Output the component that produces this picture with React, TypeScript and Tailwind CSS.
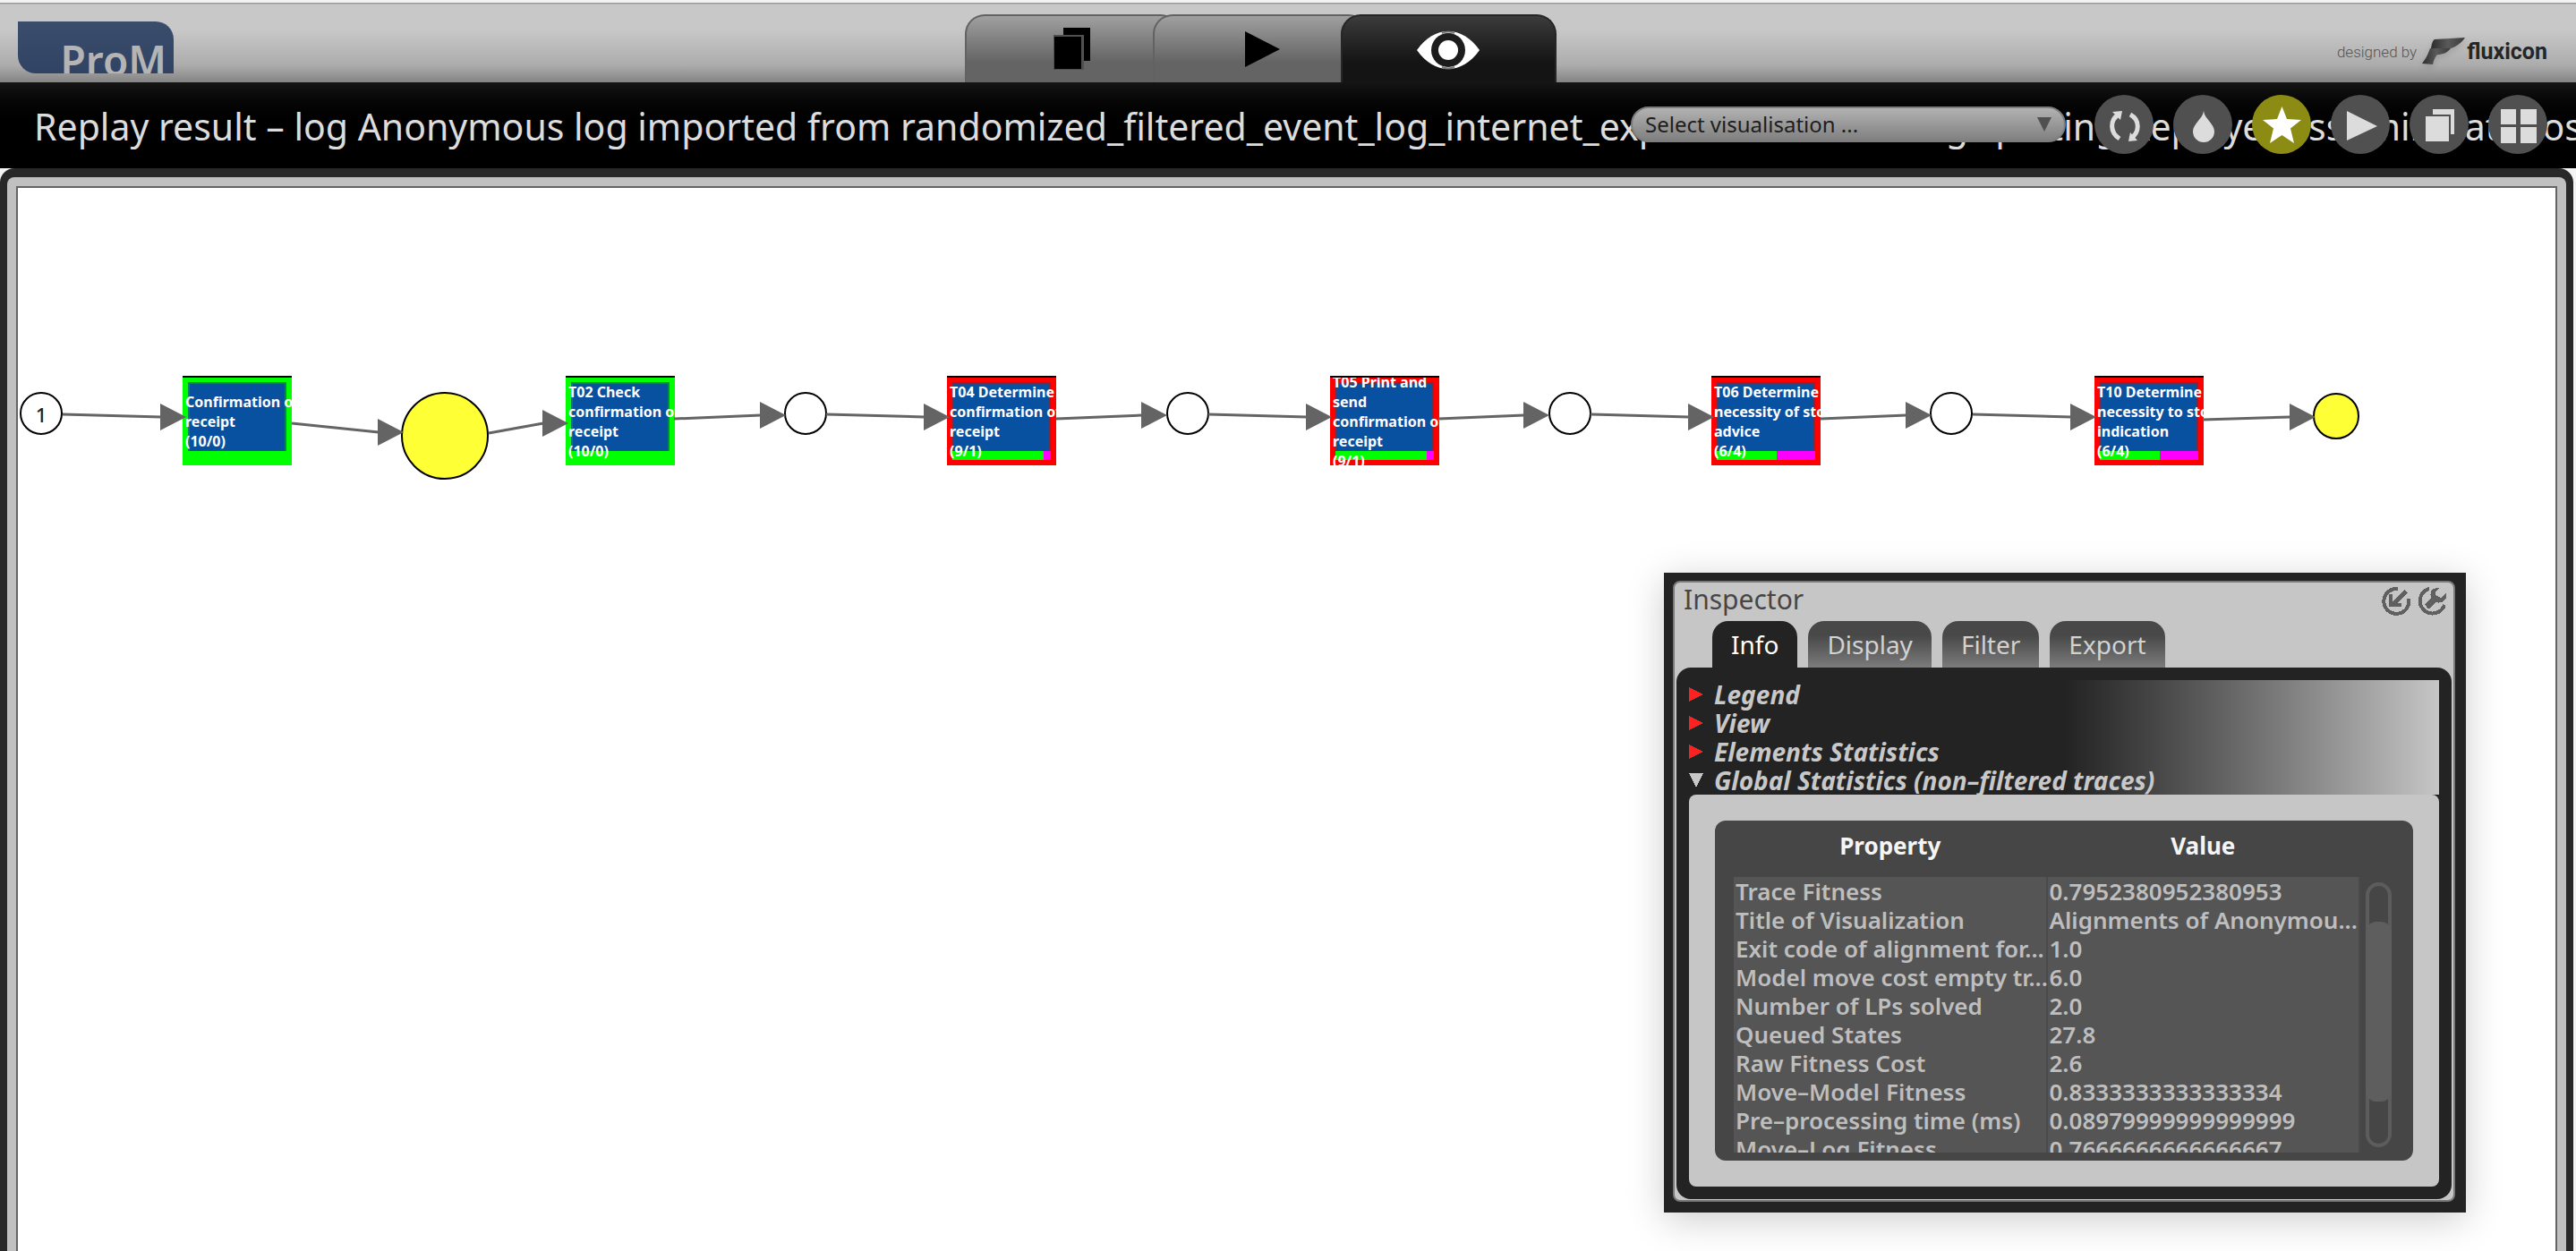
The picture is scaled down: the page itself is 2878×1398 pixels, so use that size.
import React from "react";

const SANS = "font-['Noto_Sans','Open_Sans',sans-serif]";

/* ---------- top bar ---------- */

function PagesIcon() {
  return (
    <svg width="42" height="48" viewBox="0 0 42 48" aria-hidden="true">
      <rect x="11" y="1" width="30" height="37" fill="#000" />
      <rect x="0" y="9" width="34" height="39" fill="#505050" />
      <rect x="1" y="11" width="30" height="36" fill="#000" />
    </svg>
  );
}

function PlayIcon() {
  return (
    <svg width="40" height="42" viewBox="0 0 40 42" aria-hidden="true">
      <path d="M1 1 L40 21 L1 41 Z" fill="#000" />
    </svg>
  );
}

function EyeIcon() {
  return (
    <svg width="70" height="44" viewBox="0 0 70 44" aria-hidden="true">
      <path d="M0 22 C10 8 22 1 35 1 C48 1 60 8 70 22 C60 36 48 43 35 43 C22 43 10 36 0 22 Z" fill="#fff" />
      <circle cx="35" cy="22" r="19" fill="#1c1c1c" />
      <path d="M28 3 Q35 0 42 3 M28 41 Q35 44 42 41" stroke="#777" strokeWidth="2" fill="none" />
      <circle cx="35" cy="22" r="11" fill="#fff" />
    </svg>
  );
}

function FluxiconMark() {
  return (
    <svg width="48" height="32" viewBox="0 0 48 32" aria-hidden="true" className="drop-shadow-md">
      <defs>
        <linearGradient id="flux" x1="0" y1="0" x2="1" y2="0">
          <stop offset="0" stopColor="#2c2c2c" />
          <stop offset="0.5" stopColor="#5a5a5a" />
          <stop offset="1" stopColor="#3a3a3a" />
        </linearGradient>
      </defs>
      <path d="M14 2 L48 0 C44 6 38 10 32 12 L10 12 C11 6 12 3 14 2 Z" fill="url(#flux)" />
      <path d="M9 12 L32 12 C28 17 23 19 17 19 C14 22 13 26 12 30 L0 29 C4 24 7 18 9 12 Z" fill="url(#flux)" />
    </svg>
  );
}

function TopBar() {
  const tab = "flex h-[76px] w-[241px] items-start justify-center rounded-t-[22px] border-2 border-b-0";
  return (
    <header className="flex items-end justify-between border-t-[3px] border-[#f2f2f2] bg-[linear-gradient(#9a9a9a_1px,#c8c8c8_2px,#c8c8c8_30px,#acacac_70px,#848484_100%)] pl-5">
      <div className="mt-[21px] mr-3 mb-[10px] h-[58px] w-[174px] overflow-hidden rounded-tr-[20px] rounded-bl-[20px] bg-linear-to-b from-[#3b4d6b] to-[#304364] pt-5 pr-2 text-right text-[46px] leading-[46px] font-semibold text-[#b4b4b4]">
        ProM
      </div>
      <nav className="flex" aria-label="Views">
        <button aria-label="Workspace" className={`${tab} -mr-[31px] border-[#626262] bg-linear-to-b from-[#a0a0a0] to-[#646464] to-70% pt-3`}>
          <PagesIcon />
        </button>
        <button aria-label="Actions" className={`${tab} -mr-[31px] border-[#626262] bg-linear-to-b from-[#a0a0a0] to-[#646464] to-70% pt-4 pl-1`}>
          <PlayIcon />
        </button>
        <button aria-label="Visualise" className={`${tab} border-[#262626] bg-linear-to-b from-[#3c3c3c] to-[#141414] to-70% pt-4`}>
          <EyeIcon />
        </button>
      </nav>
      <a href="#fluxicon" className="mr-8 mb-[18px] flex items-center gap-[2px] font-['Roboto',sans-serif] text-[#262626]">
        <span className="mr-1 text-[17px] leading-[32px] font-light text-[#555]">designed by</span>
        <FluxiconMark />
        <span className="text-[25px] leading-[32px] font-bold">fluxicon</span>
      </a>
    </header>
  );
}

/* ---------- title bar ---------- */

const LIGHT = "#dcdcdc";

const ACTIONS: { name: string; active?: boolean; art: React.ReactNode }[] = [
  {
    name: "Refresh",
    art: (
      <>
        <path d="M27 22 C17 28 17 42 28 49 M40 22 C51 28 51 42 40 49" fill="none" stroke={LIGHT} strokeWidth="5" />
        <path d="M20 19 L31 18 L29 28 Z M38 52 L40 42 L48 51 Z" fill={LIGHT} />
      </>
    ),
  },
  {
    name: "Drop",
    art: <path d="M34 18 C35 27 46 32 46 41 A12 12 0 0 1 22 41 C22 32 33 27 34 18 Z" fill={LIGHT} />,
  },
  {
    name: "Favourite",
    active: true,
    art: <path d="M33.500 13 L39 27 L55 28 L43 37.500 L47 54 L33.500 45 L20 54 L24 37.500 L12 28 L28 27 Z" fill="#fff" />,
  },
  { name: "Run", art: <path d="M18 18 L52 35 L18 51 Z" fill={LIGHT} /> },
  {
    name: "Copy",
    art: (
      <>
        <rect x="26" y="16" width="24" height="28" fill={LIGHT} />
        <rect x="16" y="22" width="30" height="32" fill="#505050" />
        <rect x="18" y="24" width="26" height="28" fill={LIGHT} />
      </>
    ),
  },
  {
    name: "Grid",
    art: <path d="M14 16h17v17H14z M36 16h18v17H36z M14 36h17v18H14z M36 36h18v18H36z" fill={LIGHT} />,
  },
];

function TitleBar() {
  return (
    <div className="relative flex h-24 items-center overflow-hidden bg-linear-to-b from-[#151515] to-black to-60% pt-[2px] pl-[38px]">
      <h1 className="text-[41px] leading-[56px] whitespace-nowrap text-[#dcdcdc]">
        Replay result – log Anonymous log imported from randomized_filtered_event_log_internet_explorer on net using
        splitting Replayer assuming at most
      </h1>
      <div className="absolute top-[14px] right-8 flex items-center gap-[22px]">
        <div className="relative mr-[10px]">
          <select
            aria-label="Select visualisation"
            className="h-10 w-[486px] appearance-none rounded-full border-2 border-[#7c7c7c] bg-linear-to-b from-[#b2b2b2] to-[#808080] px-[14px] text-[24px] leading-[32px] text-[#1e1e1e]"
          >
            <option>Select visualisation ...</option>
          </select>
          <svg width="16" height="16" viewBox="0 0 16 16" className="pointer-events-none absolute top-3 right-4" aria-hidden="true">
            <path d="M0 0 H16 L8 16 Z" fill="#505050" />
          </svg>
        </div>
        {ACTIONS.map((a) => (
          <button
            key={a.name}
            aria-label={a.name}
            className={`size-[66px] rounded-full ${a.active ? "bg-[#8c8c14]" : "bg-[#505050]"}`}
          >
            <svg viewBox="0 0 66 66" className="size-full" aria-hidden="true">
              {a.art}
            </svg>
          </button>
        ))}
      </div>
    </div>
  );
}

/* ---------- process model ---------- */

const TRANSITIONS = [
  { x: 184, label: "Confirmation of\nreceipt\n(10/0)", sync: 100 },
  { x: 612, label: "T02 Check\nconfirmation of\nreceipt\n(10/0)", sync: 100 },
  { x: 1038, label: "T04 Determine\nconfirmation of\nreceipt\n(9/1)", sync: 93 },
  { x: 1466, label: "T05 Print and\nsend\nconfirmation of\nreceipt\n(9/1)", sync: 93 },
  { x: 1892, label: "T06 Determine\nnecessity of stop\nadvice\n(6/4)", sync: 61 },
  { x: 2320, label: "T10 Determine\nnecessity to stop\nindication\n(6/4)", sync: 61 },
];

const PLACES = [
  { x: 26, y: 252, r: 23, fill: "#fff" },
  { x: 477, y: 277, r: 48, fill: "#ffff35" },
  { x: 880, y: 252, r: 23, fill: "#fff" },
  { x: 1307, y: 252, r: 23, fill: "#fff" },
  { x: 1734, y: 252, r: 23, fill: "#fff" },
  { x: 2160, y: 252, r: 23, fill: "#fff" },
  { x: 2590, y: 255, r: 25, fill: "#ffff35" },
];

/* x1, y1: start of the line; x2, y2: tip of the arrow head */
const ARCS = [
  [50, 253, 188, 256],
  [306, 263, 431, 273],
  [526, 274, 615, 263],
  [733, 258, 858, 254],
  [903, 253, 1041, 256],
  [1160, 258, 1284, 254],
  [1330, 253, 1468, 256],
  [1587, 258, 1711, 254],
  [1757, 253, 1895, 256],
  [2014, 258, 2138, 254],
  [2184, 253, 2322, 256],
  [2441, 259, 2567, 256],
];

function Transition({ x, label, sync }: { x: number; label: string; sync: number }) {
  const fits = sync === 100;
  return (
    <div
      className={`absolute top-[210px] flex h-[100px] w-[122px] items-center overflow-hidden border-t-2 border-black ${fits ? "bg-[#00ff00]" : "bg-[#ff0000]"}`}
      style={{ left: x }}
    >
      <div className="absolute inset-x-[6px] top-[5px] bottom-[6px] flex flex-col">
        <div className={`flex-1 border-2 border-b-0 bg-[#0850a0] ${fits ? "border-[#0a8060]" : "border-[#6a3050]"}`} />
        <div className="flex h-[10px] bg-[#ff00ff]">
          <div className="bg-[#00ff00]" style={{ width: `${sync}%` }} />
        </div>
      </div>
      <span className="relative pl-[3px] text-[16px] leading-[22px] font-bold whitespace-pre text-white">{label}</span>
    </div>
  );
}

function ProcessModel() {
  return (
    <div className="absolute inset-0 overflow-hidden">
      <svg width="2640" height="400" viewBox="0 0 2640 400" className="absolute top-0 left-0 max-w-none" role="img" aria-label="Process model">
        {PLACES.map((p) => (
          <circle key={p.x} cx={p.x} cy={p.y} r={p.r} fill={p.fill} stroke="#000" strokeWidth="2" />
        ))}
      </svg>
      <span className="absolute top-[240px] left-[18px] w-4 text-center text-[22px] leading-[26px] font-medium text-[#222]">1</span>
      {TRANSITIONS.map((t) => (
        <Transition key={t.x} {...t} />
      ))}
      <svg width="2640" height="400" viewBox="0 0 2640 400" className="pointer-events-none absolute top-0 left-0 max-w-none" aria-hidden="true">
        {ARCS.map(([x1, y1, x2, y2]) => (
          <g key={x1}>
            <line x1={x1} y1={y1} x2={x2 - 28} y2={y2} stroke="#646464" strokeWidth="3" />
            <path d={`M${x2 - 29} ${y2 - 15} L${x2} ${y2} L${x2 - 29} ${y2 + 15} Z`} fill="#646464" />
          </g>
        ))}
      </svg>
    </div>
  );
}

/* ---------- inspector ---------- */

const STATS = [
  ["Trace Fitness", "0.7952380952380953"],
  ["Title of Visualization", "Alignments of Anonymou..."],
  ["Exit code of alignment for...", "1.0"],
  ["Model move cost empty tr...", "6.0"],
  ["Number of LPs solved", "2.0"],
  ["Queued States", "27.8"],
  ["Raw Fitness Cost", "2.6"],
  ["Move–Model Fitness", "0.8333333333333334"],
  ["Pre–processing time (ms)", "0.08979999999999999"],
  ["Move–Log Fitness", "0.7666666666666667"],
];

const SECTIONS = [
  { name: "Legend", open: false },
  { name: "View", open: false },
  { name: "Elements Statistics", open: false },
  { name: "Global Statistics (non–filtered traces)", open: true },
];

function Inspector() {
  return (
    <section
      aria-label="Inspector"
      className="absolute top-[430px] right-[100px] w-[896px] bg-[#232323] pt-[9px] pr-3 pb-3 pl-[10px] shadow-[0_8px_40px_rgba(0,0,0,0.2)]"
    >
      <div className="rounded-lg border-2 border-[#7d7878] bg-[#c6c6c6] px-[2px] pb-[1px]">
        <div className="flex h-[43px] items-start justify-between pt-[5px] pr-[6px] pl-2">
          <h2 className="-mt-[2px] text-[30px] leading-[32px] text-[#464646]">Inspector</h2>
          <div className="flex gap-2 text-[#606060]">
            <button aria-label="Collapse" className="size-8">
              <svg viewBox="0 0 32 32" fill="none" stroke="currentColor" shapeRendering="crispEdges" aria-hidden="true">
                <path d="M18 2 A14 14 0 1 0 30 13" strokeWidth="4" />
                <path d="M27 5 L13 19" strokeWidth="5" />
                <path d="M10 8 V20 H22" strokeWidth="4" />
              </svg>
            </button>
            <button aria-label="Settings" className="size-8">
              <svg viewBox="0 0 32 32" fill="none" stroke="currentColor" shapeRendering="crispEdges" aria-hidden="true">
                <path d="M13 2 A14 14 0 1 0 30 20" strokeWidth="4" />
                <path d="M10 22 L20 13" strokeWidth="7" />
                <path d="M24 1 C16 0 13 6 15 12 C18 19 28 20 32 12 L32 6 L26 12 L20 9 L20 6 Z" fill="currentColor" stroke="none" />
              </svg>
            </button>
          </div>
        </div>
        <div role="tablist" className="flex gap-3 pl-10 text-[28px] leading-[36px]">
          {["Info", "Display", "Filter", "Export"].map((t, i) => (
            <button
              key={t}
              role="tab"
              aria-selected={i === 0}
              className={`h-[52px] rounded-t-[18px] px-[21px] ${i === 0 ? "bg-[#232323] text-white" : "bg-linear-to-b from-[#484848] from-30% to-[#7c7c7c] text-[#d2d2d2]"}`}
            >
              {t}
            </button>
          ))}
        </div>
        <div className="rounded-2xl bg-[#232323] p-[14px]">
          <div className="bg-linear-to-r from-[#232323] from-50% to-[#c6c6c6]">
            {SECTIONS.map((s) => (
              <button
                key={s.name}
                aria-expanded={s.open}
                className="flex h-8 w-full items-center gap-3 text-left text-[28px] leading-[32px] font-bold text-[#c8c8c8] italic"
              >
                <svg width="16" height="16" viewBox="0 0 16 16" shapeRendering="crispEdges" aria-hidden="true">
                  {s.open ? <path d="M0 0 H16 L8 16 Z" fill="#c8c8c8" /> : <path d="M0 0 L16 8 L0 16 Z" fill="#ff2020" />}
                </svg>
                {s.name}
              </button>
            ))}
          </div>
          <div className="rounded-lg bg-[#c6c6c6] p-[29px]">
            <div className="flex h-[380px] rounded-xl bg-[#464646] pr-6 pb-[9px] pl-[21px]">
              <div className="flex-1 overflow-hidden">
                <table className="w-full table-fixed border-collapse text-[26px] leading-[32px]">
                  <thead>
                    <tr className="h-[63px] text-[#f5f5f5]">
                      <th scope="col" className="pt-3 align-top font-bold">Property</th>
                      <th scope="col" className="pt-3 align-top font-bold">Value</th>
                    </tr>
                  </thead>
                  <tbody>
                    {STATS.map(([k, v]) => (
                      <tr key={k} className="bg-[#555555] font-semibold whitespace-nowrap text-[#bebebe]">
                        <td className="h-8 border-r-2 border-[#4a4a4a] p-0 pl-[2px]">{k}</td>
                        <td className="h-8 border-r-2 border-[#4a4a4a] p-0 pl-[2px]">{v}</td>
                      </tr>
                    ))}
                  </tbody>
                </table>
              </div>
              <div className="mt-[69px] mb-[6px] ml-[6px] w-[29px] rounded-full border-4 border-[#5c5c5c] pt-10">
                <div className="-mx-1 h-[201px] rounded-xl bg-[#5e5e5e]" />
              </div>
            </div>
          </div>
        </div>
      </div>
    </section>
  );
}

export default function App() {
  return (
    <div className={`flex min-h-screen flex-col overflow-hidden bg-[#f4f4f4] ${SANS}`}>
      <TopBar />
      <TitleBar />
      <div className="mr-[3px] flex flex-1 flex-col rounded-t-2xl bg-[#282828] px-2 pt-[10px]">
        <div className="flex flex-1 flex-col rounded-t-lg bg-[#c0c0c0] px-[10px] pt-[10px]">
          <main className="relative min-h-[1180px] flex-1 border-2 border-b-0 border-[#646464] bg-white">
            <ProcessModel />
            <Inspector />
          </main>
        </div>
      </div>
    </div>
  );
}
